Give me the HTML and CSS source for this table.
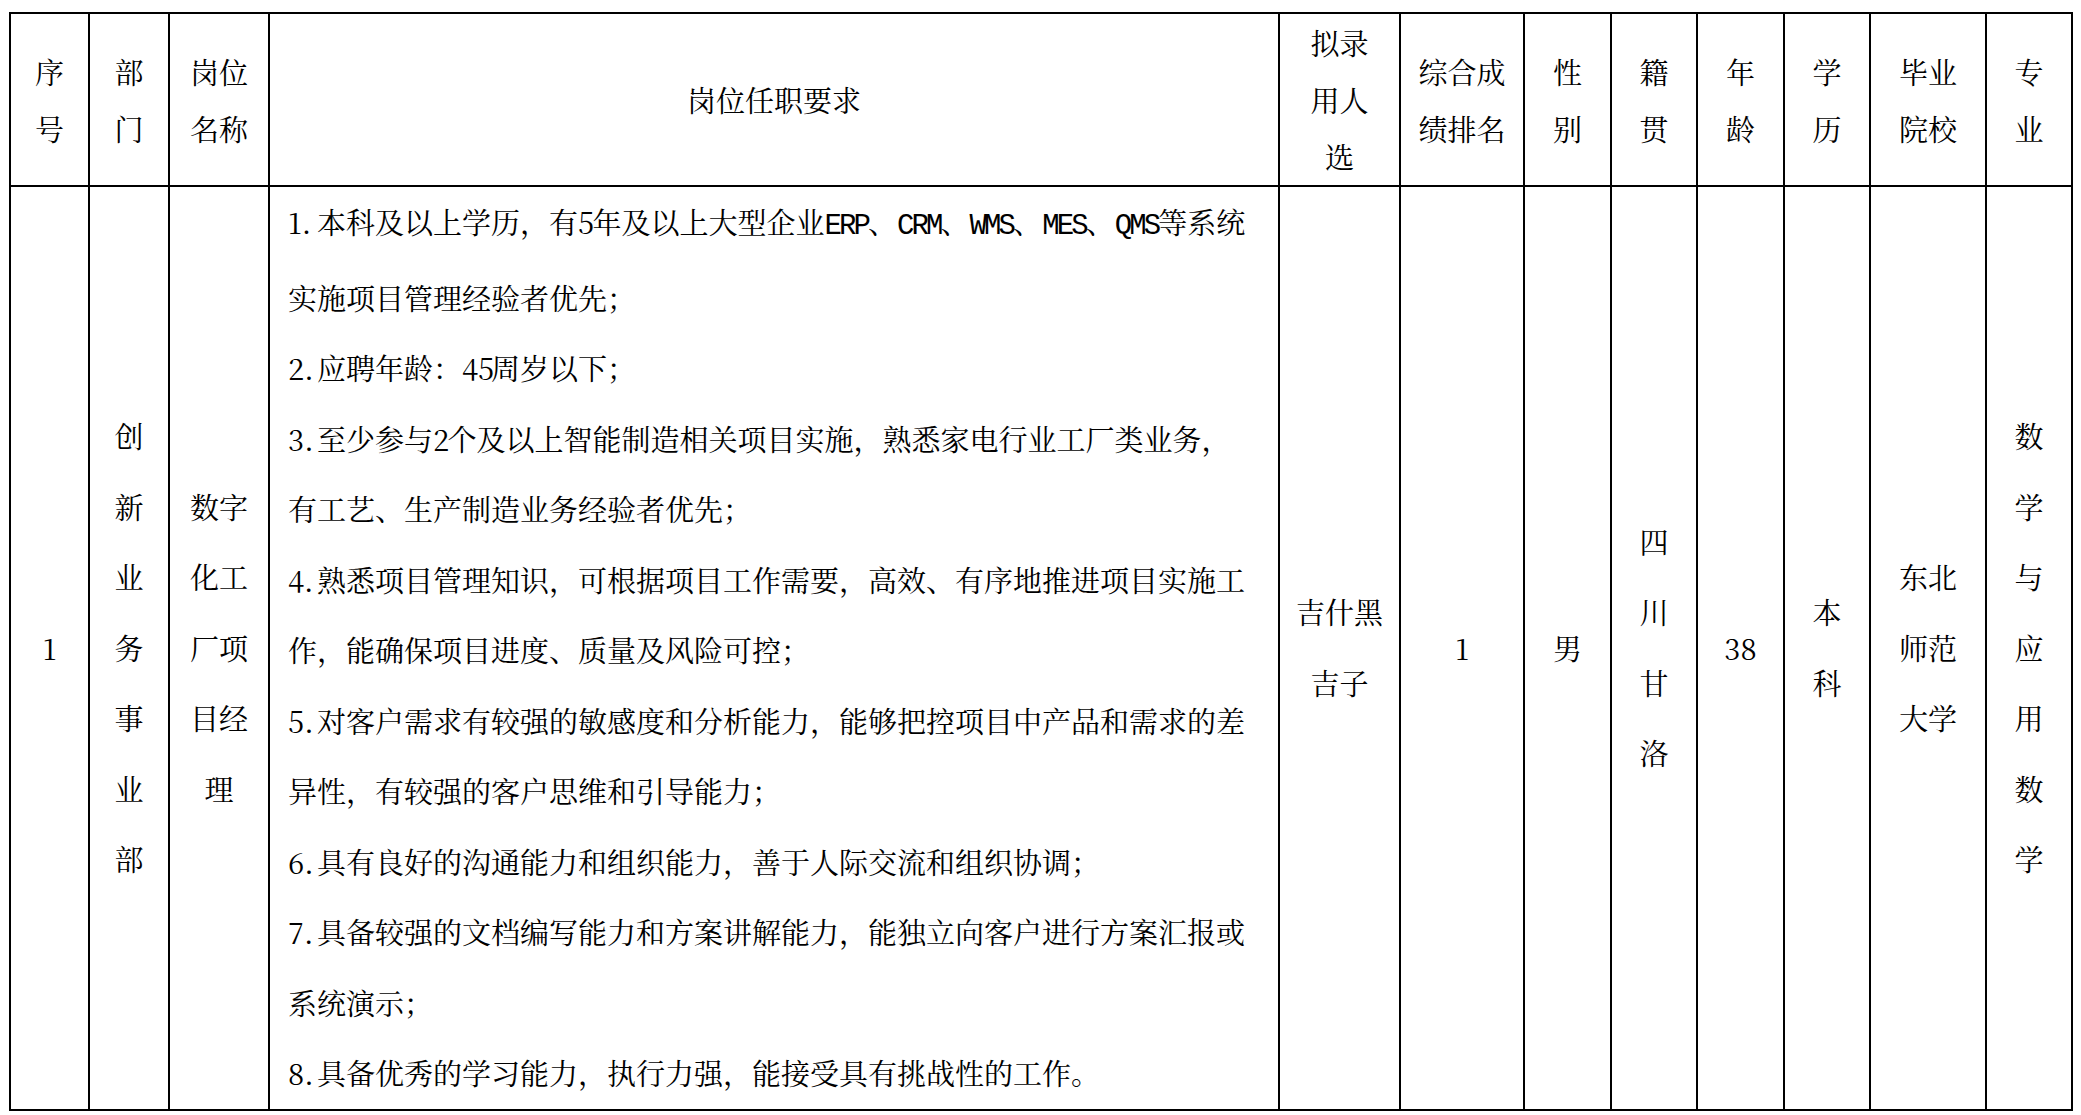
FILE: index.html
```html
<!DOCTYPE html>
<html lang="zh-CN">
<head>
<meta charset="utf-8">
<title>拟录用人选公示</title>
<link rel="stylesheet" href="styles.css">
</head>
<body>
<div class="page">
<table class="grid">
  <colgroup>
    <col class="c79"><col class="c80"><col class="c100"><col class="c1010"><col class="c121"><col class="c124"><col class="c87"><col class="c86"><col class="c87"><col class="c86"><col class="c116"><col class="c86">
  </colgroup>
  <thead>
    <tr class="head">
      <th>序<br>号</th>
      <th>部<br>门</th>
      <th>岗位<br>名称</th>
      <th>岗位任职要求</th>
      <th>拟录<br>用人<br>选</th>
      <th>综合成<br>绩排名</th>
      <th>性<br>别</th>
      <th>籍<br>贯</th>
      <th>年<br>龄</th>
      <th>学<br>历</th>
      <th>毕业<br>院校</th>
      <th>专<br>业</th>
    </tr>
  </thead>
  <tbody>
    <tr class="body">
      <td>1</td>
      <td>创<br>新<br>业<br>务<br>事<br>业<br>部</td>
      <td>数字<br>化工<br>厂项<br>目经<br>理</td>
      <td class="req">
        <div class="ln"><span class="num">1.</span>本科及以上学历，有<span class="dg">5</span>年及以上大型企业<span class="lat">ERP</span>、<span class="lat">CRM</span>、<span class="lat">WMS</span>、<span class="lat">MES</span>、<span class="lat">QMS</span>等系统</div>
        <div class="ln">实施项目管理经验者优先；</div>
        <div class="ln"><span class="num">2.</span>应聘年龄：<span class="dg2">45</span>周岁以下；</div>
        <div class="ln"><span class="num">3.</span>至少参与<span class="dg">2</span>个及以上智能制造相关项目实施，熟悉家电行业工厂类业务，</div>
        <div class="ln">有工艺、生产制造业务经验者优先；</div>
        <div class="ln"><span class="num">4.</span>熟悉项目管理知识，可根据项目工作需要，高效、有序地推进项目实施工</div>
        <div class="ln">作，能确保项目进度、质量及风险可控；</div>
        <div class="ln"><span class="num">5.</span>对客户需求有较强的敏感度和分析能力，能够把控项目中产品和需求的差</div>
        <div class="ln">异性，有较强的客户思维和引导能力；</div>
        <div class="ln"><span class="num">6.</span>具有良好的沟通能力和组织能力，善于人际交流和组织协调；</div>
        <div class="ln"><span class="num">7.</span>具备较强的文档编写能力和方案讲解能力，能独立向客户进行方案汇报或</div>
        <div class="ln">系统演示；</div>
        <div class="ln"><span class="num">8.</span>具备优秀的学习能力，执行力强，能接受具有挑战性的工作。</div>
      </td>
      <td>吉什黑<br>吉子</td>
      <td>1</td>
      <td>男</td>
      <td>四<br>川<br>甘<br>洛</td>
      <td>38</td>
      <td>本<br>科</td>
      <td>东北<br>师范<br>大学</td>
      <td>数<br>学<br>与<br>应<br>用<br>数<br>学</td>
    </tr>
  </tbody>
</table>
</div>
</body>
</html>
```

FILE: styles.css
```css
html, body {
  margin: 0;
  padding: 0;
  background: #ffffff;
}
body {
  font-family: "Noto Serif CJK SC", "Noto Sans CJK SC", "Liberation Serif", serif;
  font-size: 29px;
  color: #000000;
}
.page {
  padding: 12px 0 0 9px;
}
.grid {
  border-collapse: collapse;
  table-layout: fixed;
  width: 2064px;
  border: 2px solid #000;
}
.grid th,
.grid td {
  border: 2px solid #000;
  padding: 0;
  text-align: center;
  vertical-align: middle;
  font-weight: normal;
  white-space: nowrap;
  overflow: hidden;
}
.c79 { width: 79px; }
.c80 { width: 80px; }
.c100 { width: 100px; }
.c1010 { width: 1010px; }
.c121 { width: 121px; }
.c124 { width: 124px; }
.c87 { width: 87px; }
.c86 { width: 86px; }
.c116 { width: 116px; }
.head {
  height: 173px;
}
.head th {
  line-height: 57px;
}
.body {
  height: 917px;
}
.body td {
  line-height: 70.5px;
}
.grid td.req {
  text-align: left;
  padding-left: 18px;
}
.num {
  display: inline-block;
  width: 1em;
}
.dg {
  display: inline-block;
  width: 0.5em;
  text-align: center;
}
.dg2 {
  display: inline-block;
  width: 1em;
  text-align: center;
}
.lat {
  font-family: "Liberation Mono", monospace;
  letter-spacing: -0.1em;
}
```
